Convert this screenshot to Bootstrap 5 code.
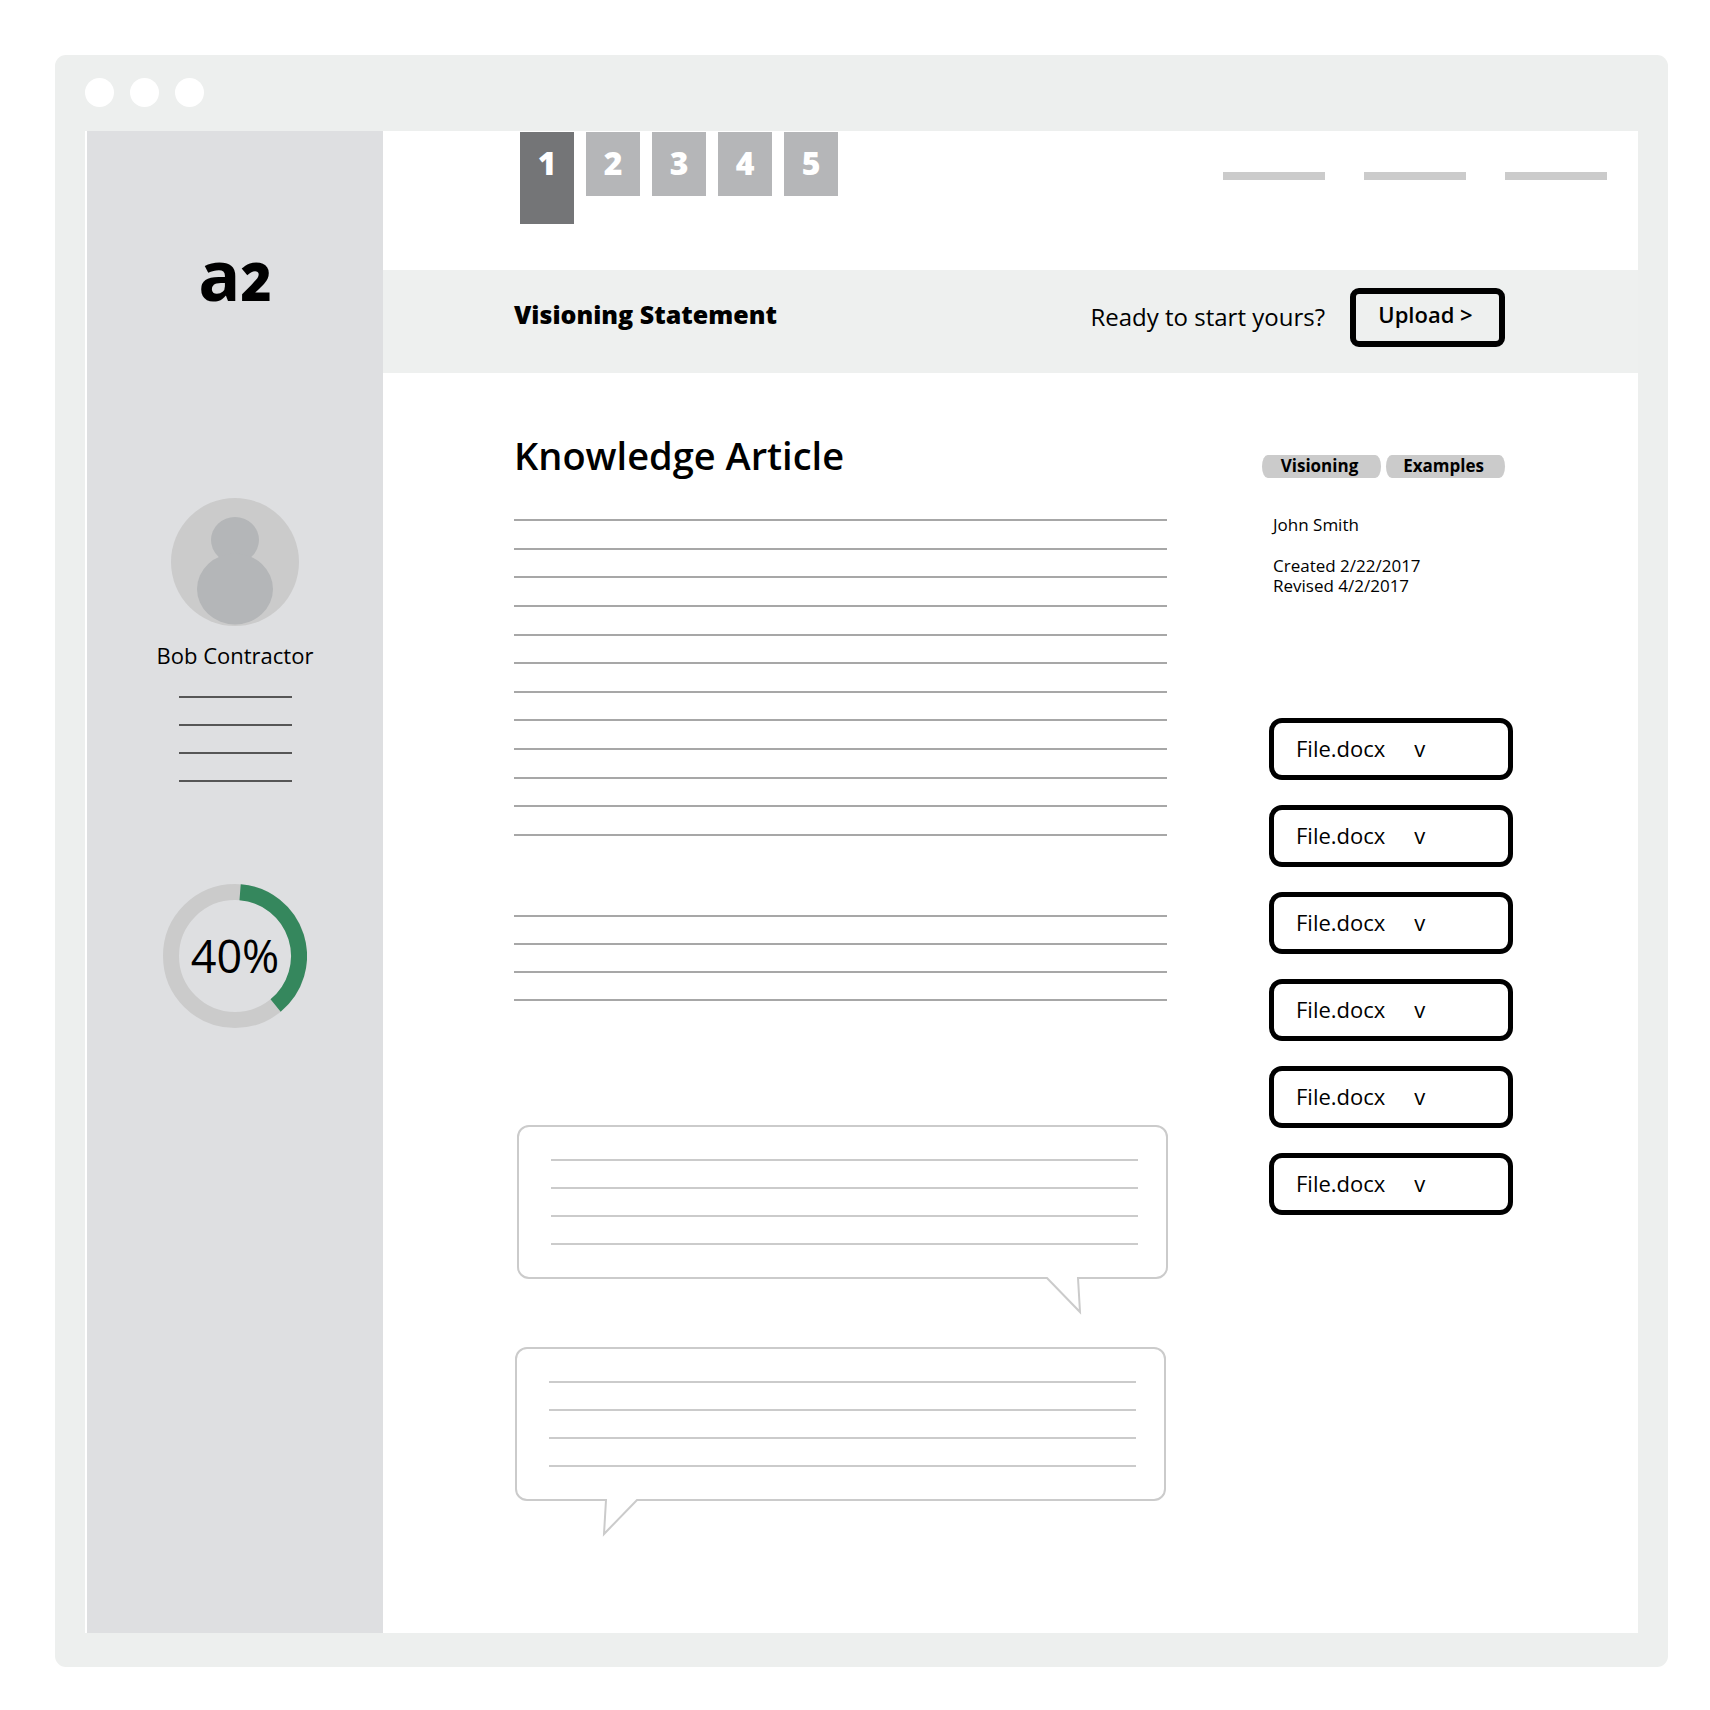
<!DOCTYPE html>
<html lang="en">
<head>
<meta charset="utf-8">
<meta name="viewport" content="width=device-width, initial-scale=1">
<title>Knowledge Article</title>
<link href="https://cdn.jsdelivr.net/npm/bootstrap@5.3.0/dist/css/bootstrap.min.css" rel="stylesheet">
<style>
body { font-family: "Open Sans", "Noto Sans", sans-serif; color: #000; background: #fff; }
.page-shell { min-height: 100vh; padding: 55px 42px 43px 55px; }
.browser { background: #edefee; border-radius: 11px; padding: 0 30px 34px; }
.browser-bar { height: 76px; gap: 16px; padding-bottom: 2px; }
.browser-dot { width: 29px; height: 29px; background: #fff; }
.browser-view { background: #fff; padding-left: 2px; }

.side { width: 296px; background: #dedfe1; padding-top: 103px; }
.brand { font-size: 70px; line-height: 80px; font-weight: 700; color: #000; }
.brand-num { font-size: 53px; font-weight: 800; }
.avatar { width: 128px; height: 128px; margin-top: 177px; }
.user-name { font-size: 22px; line-height: 30px; margin-top: 14px; }
.rules { display: flex; flex-direction: column; justify-content: space-between; height: 86px; }
.rules span { height: 2px; background: #a7a7a7; }
.rules-side { width: 113px; margin-top: 26px; }
.rules-side span { background: #565656; }
.rules-long { height: 317px; margin-bottom: 79px; }
.donut { width: 144px; height: 144px; margin-top: 102px; }
.donut text { font-size: 45px; }

.top-row { height: 139px; padding: 1px 31px 0 137px; }
.steps { gap: 12px; }
.step { width: 54px; height: 64px; padding-top: 13px; background: #b5b6b8; color: #fff; font-size: 32px; line-height: 36px; font-weight: 800; }
.step:hover { color: #fff; }
.step.active { height: 92px; background: #747577; }
.top-links { gap: 39px; margin-top: 40px; }
.top-links a { width: 102px; height: 8px; background: #cbcbcb; }

.band { min-height: 103px; background: #eef0ef; padding: 0 133px 8px 131px; }
.band-title { font-size: 25px; line-height: 32px; font-weight: 800; padding-bottom: 8px; }
.band-ask { font-size: 24px; line-height: 32px; gap: 25px; }
.band-ask span { padding-bottom: 2px; }
.btn-upload { width: 155px; height: 59px; border: 6px solid #000; border-radius: 9px; padding: 0 4px 8px 0; font-size: 22px; line-height: 30px; font-weight: 600; color: #000; }

.content { padding: 58px 125px 0 131px; gap: 95px; }
.article-title { font-size: 38px; line-height: 48px; font-weight: 600; margin-bottom: 40px; }
.bubble { position: relative; border: 2px solid #cbcbcb; border-radius: 12px; padding: 32px 28px 32px 32px; }
.bubble .rules span { background: #cbcbcb; }
.bubble svg { position: absolute; top: 100%; width: 38px; height: 40px; }
.bubble-right { margin: 124px -1px 0 3px; }
.bubble-right svg { right: 83px; }
.bubble-left { margin: 68px 1px 0; }
.bubble-left svg { left: 84px; }

.aside-col { width: 251px; padding-top: 24px; }
.tags { gap: 5px; padding-right: 8px; }
.tag { flex: 1 1 0; height: 23px; background: #cbcbcb; border-radius: 6px / 12px; font-size: 17px; line-height: 22px; font-weight: 700; color: #000; padding-right: 4px; }
.meta { font-size: 17px; line-height: 20px; margin-top: 37px; padding-left: 11px; }
.meta p { margin-bottom: 21px; }
.files { gap: 25px; margin: 122px 0 0 7px; }
.btn-file { height: 62px; border: 5px solid #000; border-radius: 13px; padding: 0 0 2px 22px; font-size: 22px; line-height: 30px; color: #000; gap: 29px; }
</style>
<script src="https://cdn.jsdelivr.net/npm/bootstrap@5.3.0/dist/js/bootstrap.bundle.min.js" defer></script>
</head>
<body>
<div class="page-shell d-flex">
  <div class="browser d-flex flex-column flex-grow-1">
    <div class="browser-bar d-flex align-items-center">
      <span class="browser-dot rounded-circle"></span>
      <span class="browser-dot rounded-circle"></span>
      <span class="browser-dot rounded-circle"></span>
    </div>
    <div class="browser-view d-flex flex-grow-1">
      <aside class="side d-flex flex-column align-items-center flex-shrink-0">
        <a class="brand text-decoration-none" href="#">a<span class="brand-num">2</span></a>
        <svg class="avatar" viewBox="0 0 128 128" aria-hidden="true">
          <circle cx="64" cy="64" r="64" fill="#cbcbcb"/>
          <ellipse cx="64" cy="42" rx="24" ry="23" fill="#b4b6b8"/>
          <ellipse cx="64" cy="91" rx="38" ry="35.500" fill="#b4b6b8"/>
        </svg>
        <div class="user-name">Bob Contractor</div>
        <div class="rules rules-side"><span></span><span></span><span></span><span></span></div>
        <svg class="donut" viewBox="0 0 144 144" role="img" aria-label="Progress">
          <circle cx="72" cy="72" r="64" fill="none" stroke="#cbcbcb" stroke-width="16"/>
          <path d="M77.100 8.200A64 64 0 0 1 112.600 121.500" fill="none" stroke="#35875d" stroke-width="16"/>
          <text x="72" y="89" text-anchor="middle">40%</text>
        </svg>
      </aside>
      <main class="flex-grow-1">
        <header class="top-row d-flex justify-content-between align-items-start">
          <nav class="steps d-flex" aria-label="Steps">
            <a class="step active text-center text-decoration-none" href="#">1</a>
            <a class="step text-center text-decoration-none" href="#">2</a>
            <a class="step text-center text-decoration-none" href="#">3</a>
            <a class="step text-center text-decoration-none" href="#">4</a>
            <a class="step text-center text-decoration-none" href="#">5</a>
          </nav>
          <nav class="top-links d-flex"><a href="#"></a><a href="#"></a><a href="#"></a></nav>
        </header>
        <section class="band d-flex justify-content-between align-items-center">
          <h2 class="band-title mb-0">Visioning Statement</h2>
          <div class="band-ask d-flex align-items-center">
            <span>Ready to start yours?</span>
            <button type="button" class="btn btn-upload">Upload &gt;</button>
          </div>
        </section>
        <div class="content d-flex align-items-start">
          <article class="flex-grow-1">
            <h1 class="article-title">Knowledge Article</h1>
            <div class="rules rules-long"><span></span><span></span><span></span><span></span><span></span><span></span><span></span><span></span><span></span><span></span><span></span><span></span></div>
            <div class="rules"><span></span><span></span><span></span><span></span></div>
            <div class="bubble bubble-right">
              <div class="rules"><span></span><span></span><span></span><span></span></div>
              <svg viewBox="0 0 38 40" aria-hidden="true"><path d="M2 0H34V4H2z" fill="#fff"/><path d="M0 1H2L35 35L33 1H36" fill="#fff" stroke="#cbcbcb" stroke-width="2"/></svg>
            </div>
            <div class="bubble bubble-left">
              <div class="rules"><span></span><span></span><span></span><span></span></div>
              <svg viewBox="0 0 38 40" aria-hidden="true"><path d="M4 0H36V4H4z" fill="#fff"/><path d="M2 1H5L3 35L36 1H38" fill="#fff" stroke="#cbcbcb" stroke-width="2"/></svg>
            </div>
          </article>
          <aside class="aside-col flex-shrink-0">
            <div class="tags d-flex">
              <a class="tag text-center text-decoration-none" href="#">Visioning</a>
              <a class="tag text-center text-decoration-none" href="#">Examples</a>
            </div>
            <div class="meta"><p>John Smith</p>Created 2/22/2017<br>Revised 4/2/2017</div>
            <div class="files d-flex flex-column">
              <button type="button" class="btn btn-file d-flex align-items-center"><span>File.docx</span><span>v</span></button>
              <button type="button" class="btn btn-file d-flex align-items-center"><span>File.docx</span><span>v</span></button>
              <button type="button" class="btn btn-file d-flex align-items-center"><span>File.docx</span><span>v</span></button>
              <button type="button" class="btn btn-file d-flex align-items-center"><span>File.docx</span><span>v</span></button>
              <button type="button" class="btn btn-file d-flex align-items-center"><span>File.docx</span><span>v</span></button>
              <button type="button" class="btn btn-file d-flex align-items-center"><span>File.docx</span><span>v</span></button>
            </div>
          </aside>
        </div>
      </main>
    </div>
  </div>
</div>
</body>
</html>
